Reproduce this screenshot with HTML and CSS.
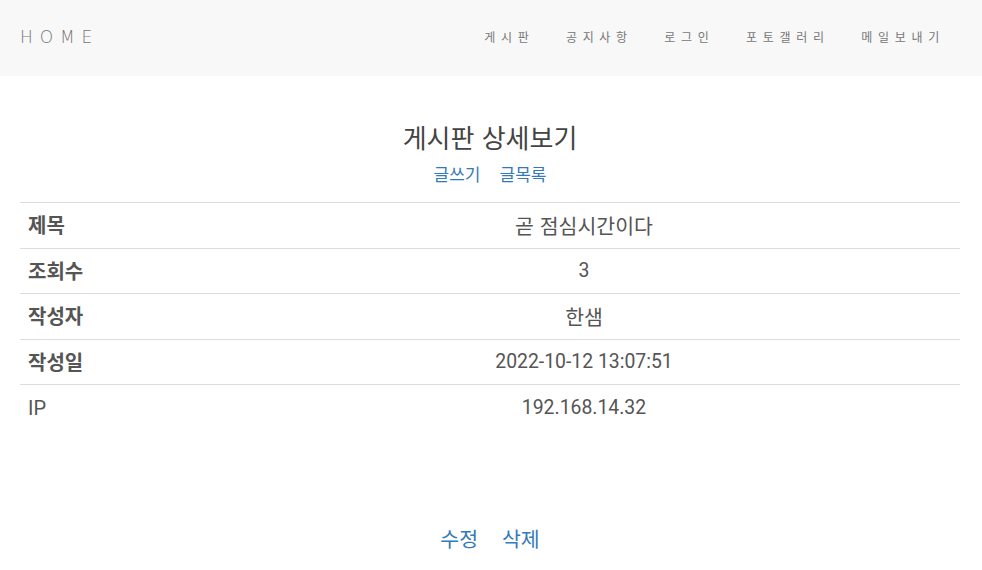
FILE: index.html
```html
<!DOCTYPE html>
<html lang="ko">
<head>
<meta charset="utf-8">
<title>게시판 상세보기</title>
<link rel="stylesheet" href="styles.css">
</head>
<body>
<header class="navbar">
  <a class="brand" href="#">HOME</a>
  <nav class="menu">
    <a href="#">게시판</a>
    <a href="#">공지사항</a>
    <a href="#">로그인</a>
    <a href="#">포토갤러리</a>
    <a href="#">메일보내기</a>
  </nav>
</header>
<main class="content">
  <h2 class="title">게시판 상세보기</h2>
  <div class="links">
    <a href="#">글쓰기</a>
    <a href="#">글목록</a>
  </div>
  <table class="detail">
    <tr><th>제목</th><td class="ko">곧 점심시간이다</td></tr>
    <tr><th>조회수</th><td>3</td></tr>
    <tr><th>작성자</th><td class="ko">한샘</td></tr>
    <tr><th>작성일</th><td>2022-10-12 13:07:51</td></tr>
    <tr><th class="plain">IP</th><td>192.168.14.32</td></tr>
  </table>
  <div class="actions">
    <a href="#">수정</a>
    <a href="#">삭제</a>
  </div>
</main>
</body>
</html>
```
FILE: styles.css
```css
* { box-sizing: border-box; }
body {
  margin: 0;
  font-family: Roboto, "Noto Sans CJK KR", sans-serif;
  color: #555;
  background: #fff;
}
a { text-decoration: none; }
.navbar {
  height: 76px;
  background: #f8f8f8;
  display: flex;
  align-items: center;
  justify-content: space-between;
  padding: 0 37px 3px 20px;
}
.brand {
  font-family: "DejaVu Sans", sans-serif;
  font-size: 17px;
  letter-spacing: 6.9px;
  color: #777;
  font-weight: 300;
}
.menu {
  display: flex;
  gap: 31.5px;
}
.menu a {
  font-family: "Noto Sans CJK KR", sans-serif;
  font-size: 12px;
  letter-spacing: 5.7px;
  color: #777;
}
.content {
  padding: 0 22px 0 20px;
}
.title {
  margin: 0;
  padding-top: 42px;
  text-align: center;
  font-family: "Noto Sans CJK KR", sans-serif;
  font-weight: 400;
  font-size: 26px;
  line-height: 38px;
  color: #444;
}
.links {
  display: flex;
  justify-content: center;
  gap: 19px;
  font-family: "Noto Sans CJK KR", sans-serif;
  font-size: 17px;
  line-height: 24px;
  margin-top: 6px;
  margin-bottom: 16px;
}
.links a { color: #337ab7; }
.detail {
  width: 100%;
  border-collapse: collapse;
  font-size: 19.4px;
}
.detail th, .detail td {
  border-top: 1px solid #ddd;
  padding: 8px;
  line-height: 28px;
  height: 45.5px;
}
.detail th {
  width: 20%;
  text-align: left;
  font-family: "Noto Sans CJK KR", sans-serif;
  font-size: 20px;
  font-weight: 700;
  color: #555;
}
.detail th.plain { font-family: Roboto, sans-serif; font-weight: 400; font-size: 20px; }
.detail td {
  text-align: center;
  color: #555;
}
.detail td.ko {
  font-family: "Noto Sans CJK KR", sans-serif;
  font-size: 20.5px;
}
.actions {
  margin-top: 94px;
  display: flex;
  justify-content: center;
  gap: 24px;
  font-family: "Noto Sans CJK KR", sans-serif;
  font-size: 20.5px;
  line-height: 28px;
}
.actions a { color: #337ab7; }
```
